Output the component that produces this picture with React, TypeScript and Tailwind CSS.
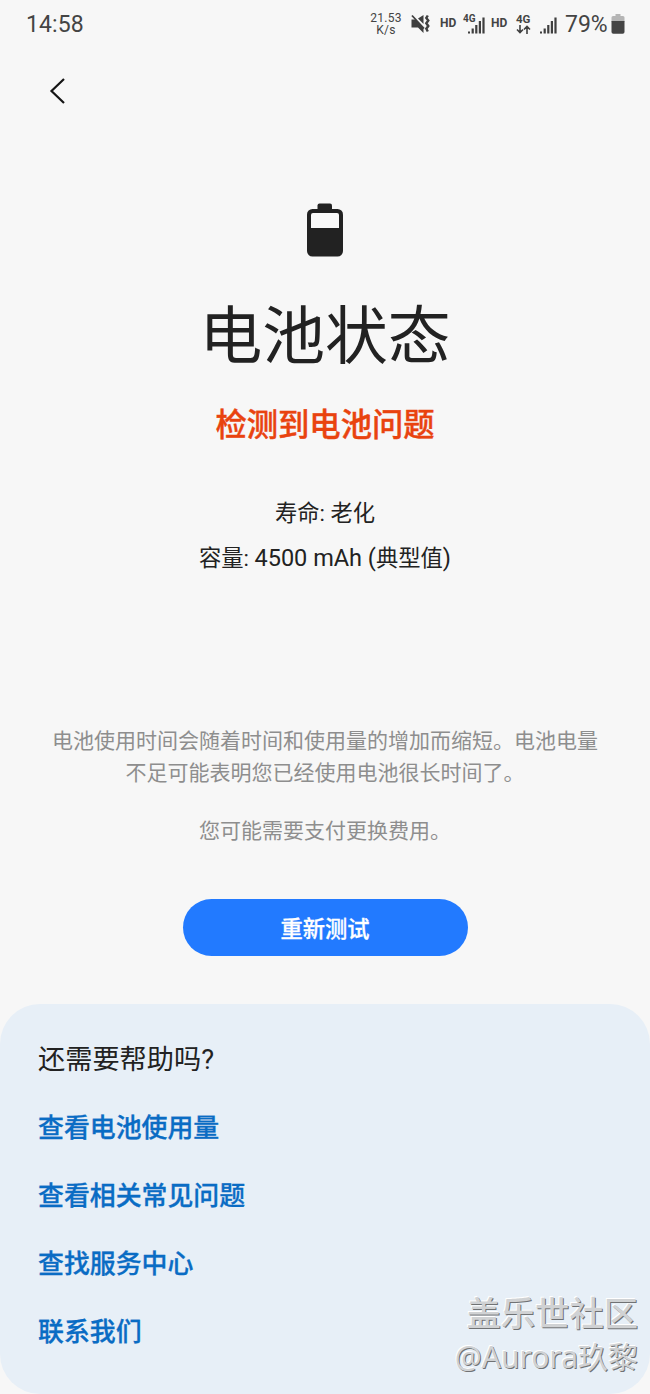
import React from 'react';

const helpLinks = ['查看电池使用量', '查看相关常见问题', '查找服务中心', '联系我们'];

function MuteIcon() {
  return (
    <svg width="20" height="20" viewBox="0 0 20 20" className="text-[#3f3f3f]">
      <path d="M.5 5.500h4L12.500 13.500v5.500L7 13.500H.5z" fill="currentColor" />
      <path d="M7 4.500L12.500 1v9z" fill="currentColor" />
      <path d="M1 1.500l12 13" stroke="currentColor" strokeWidth="1.800" />
      <path d="M16.800 1.500l-1.500 2.500 2 2.500-2 2.800 2 2.700-2 2.700 1.500 2.800" fill="none" stroke="currentColor" strokeWidth="2.400" />
    </svg>
  );
}

function SignalBars() {
  return (
    <svg width="17" height="17" viewBox="0 0 17 17" fill="#3f3f3f">
      <rect x="0" y="14.5" width="2" height="2" />
      <rect x="3.6" y="11.5" width="2.2" height="5" />
      <rect x="7.2" y="8" width="2.2" height="8.5" />
      <rect x="10.8" y="4" width="2.2" height="12.5" />
      <rect x="14.4" y="0.5" width="2.2" height="16" />
    </svg>
  );
}

function StatusBar() {
  return (
    <header className="flex h-12 items-start justify-between pl-[26px] pr-[25px] text-[#444]">
      <span className="mt-[12px] text-[23px] leading-[26px] tracking-[0.1px]">14:58</span>
      <div className="flex items-start">
        <div className="mt-[12px] w-[34px] text-center text-[12px] leading-[12px] tracking-[0.3px]">
          <div>21.53</div>
          <div>K/s</div>
        </div>
        <div className="ml-[8px] mt-[14px]">
          <MuteIcon />
        </div>
        <span className="ml-[9px] mt-[17px] w-[16px] text-[12px] font-bold leading-[13px]">HD</span>
        <div className="ml-[7px] mt-[14px] flex w-[23px]">
          <span className="-mr-[9px] w-[14px] text-[10px] font-bold leading-[10px]">4G</span>
          <div className="mt-[3px]">
            <SignalBars />
          </div>
        </div>
        <span className="ml-[5px] mt-[17px] w-[16px] text-[12px] font-bold leading-[13px]">HD</span>
        <div className="ml-[9px] mt-[14px] w-[15px]">
          <div className="text-[11.500px] font-bold leading-[11px]">4G</div>
          <svg width="15" height="9" viewBox="0 0 15 9" fill="none" stroke="#3f3f3f" strokeWidth="1.6">
            <path d="M4 0v7.5M1 4.5l3 3 3-3M11 9V1.5M8 4.5l3-3 3 3" />
          </svg>
        </div>
        <div className="ml-[9px] mt-[17px]">
          <SignalBars />
        </div>
        <span className="ml-[8px] mt-[12px] w-[44px] text-[23px] leading-[26px]">79%</span>
        <svg width="14" height="20" viewBox="0 0 14 20" className="ml-[2px] mt-[14px]">
          <path d="M4.5 0h5v2h2.5a1.5 1.5 0 0 1 1.5 1.5V8H.5V3.500A1.500 1.500 0 0 1 2 2h2.500z" fill="#b5b5b5" />
          <path d="M.5 7h13v11a1.800 1.800 0 0 1-1.800 1.800H2.300A1.800 1.800 0 0 1 .5 18z" fill="#444" />
        </svg>
      </div>
    </header>
  );
}

function BatteryIcon() {
  return (
    <svg width="36" height="54" viewBox="0 0 36 54">
      <path d="M10.500 8V2.500Q10.500 .5 12.500 .5h10.500q2 0 2 2V8z" fill="#222" />
      <rect x="0" y="6" width="36" height="47.500" rx="5.500" fill="#222" />
      <path d="M4 12q0-2 2-2h24q2 0 2 2v13H4z" fill="#fafafa" />
    </svg>
  );
}

export default function App() {
  return (
    <div className="flex h-[1394px] w-[650px] flex-col overflow-hidden bg-[#f7f7f7] font-[Roboto,'Noto_Sans_CJK_SC',sans-serif] text-[#222]">
      <StatusBar />
      <nav className="h-[155px] pl-[49px] pt-[30px]">
        <svg width="17" height="26" viewBox="0 0 17 26" fill="none" stroke="#151515" strokeWidth="2.200">
          <path d="M15 1L2.500 13 15 25" />
        </svg>
      </nav>

      <main className="flex flex-col items-center">
        <BatteryIcon />
        <h1 className="mt-[40px] text-[62.800px] leading-[80px]">电池状态</h1>
        <p className="mt-[29px] text-[31.300px] font-medium leading-[40px] text-[#e9430f] [-webkit-text-stroke:0.4px_#e9430f]">检测到电池问题</p>

        <div className="mt-[45px] text-center text-[22.300px] leading-[45px]">
          <p>寿命: 老化</p>
          <p>
            容量: <span className="text-[23.500px]">4500 mAh (</span>典型值<span className="text-[23.500px]">)</span>
          </p>
        </div>

        <div className="mt-[144px] text-center text-[21px] leading-8 text-[#8e8e8e]">
          <p>
            电池使用时间会随着时间和使用量的增加而缩短。电池电量
            <br />
            不足可能表明您已经使用电池很长时间了。
          </p>
          <p className="mt-[26px]">您可能需要支付更换费用。</p>
        </div>

        <button className="mt-[52px] h-[57px] w-[285px] rounded-full bg-[#227aff] pt-[5px] text-[22.300px] font-medium text-white [-webkit-text-stroke:0.3px_#fff]">
          重新测试
        </button>
      </main>

      <section className="relative mt-12 h-[390px] shrink-0 rounded-[40px] bg-[#e7eff7] px-[38px] pt-[36px]">
        <h2 className="text-[27.200px] leading-[40px]">还需要帮助吗?</h2>
        <ul className="mt-[14px] text-[25.900px] font-medium leading-[68px] text-[#0a6cc4] [-webkit-text-stroke:0.3px_#0a6cc4]">
          {helpLinks.map((link) => (
            <li key={link}>{link}</li>
          ))}
        </ul>

        {/* Community watermark over the help card */}
        <div className="absolute bottom-[16px] right-[12px] text-right font-['Noto_Sans','Noto_Sans_CJK_SC',sans-serif] text-[#d0d2d4]">
          <div className="text-[34.300px] font-medium leading-[47px] [text-shadow:1px_1px_0_#707274,-1px_-1px_0_#fff]">盖乐世社区</div>
          <div className="text-[30px] leading-[42px] [text-shadow:1px_1px_0_#707274,-1px_-1px_0_#fff]">@Aurora玖黎</div>
        </div>
      </section>
    </div>
  );
}
